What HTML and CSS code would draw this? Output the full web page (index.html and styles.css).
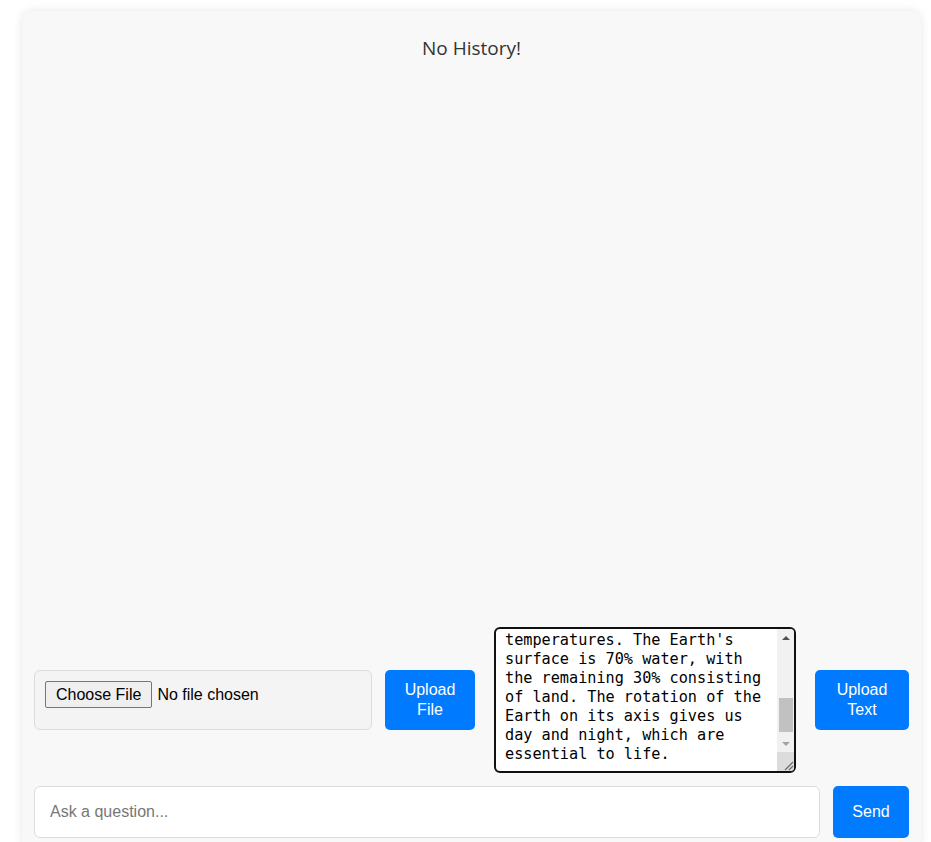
FILE: index.html
```html
<!DOCTYPE html>
<html lang="en">
<head>
<meta charset="utf-8">
<title>Chat</title>
<link rel="stylesheet" href="styles.css">
</head>
<body>
<div class="chat">
  <div class="history">
    <p class="empty">No History!</p>
  </div>
  <div class="upload-row">
    <div class="file-box">
      <input type="file" class="file-input">
    </div>
    <button class="btn btn-file">Upload File</button>
    <div class="text-wrap">
      <textarea class="text-input" id="txt">The Earth is the third planet from the Sun and the only astronomical object known to harbor life. It formed about 4.5 billion years ago. Its atmosphere is made mostly of nitrogen and oxygen, and it shields the surface from harmful solar radiation while keeping moderate
temperatures. The Earth's surface is 70% water, with the remaining 30% consisting of land. The rotation of the Earth on its axis gives us day and night, which are essential to life.</textarea>
      <div class="sb" aria-hidden="true">
        <div class="sb-btn"><span class="arrow-up"></span></div>
        <div class="sb-track"><div class="sb-thumb"></div></div>
        <div class="sb-btn"><span class="arrow-down"></span></div>
        <div class="sb-corner">
          <svg width="12" height="12" viewBox="0 0 12 12"><path d="M11 3 L3 11 M11 7 L7 11" stroke="#6b6b6b" stroke-width="1.2" fill="none"/></svg>
        </div>
      </div>
    </div>
    <button class="btn btn-text">Upload Text</button>
  </div>
  <div class="ask-row">
    <input type="text" class="ask-input" placeholder="Ask a question...">
    <button class="btn btn-send">Send</button>
  </div>
</div>
<script src="script.js"></script>
</body>
</html>
```
FILE: styles.css
```css
html, body {
  margin: 0;
  padding: 0;
  overflow: hidden;
  background: #ffffff;
}
body {
  font-family: "Liberation Sans", Arial, sans-serif;
}
.chat {
  box-sizing: border-box;
  width: 899px;
  height: 839px;
  margin: 11px 0 0 22px;
  padding: 12px;
  background: #f8f8f8;
  border-radius: 10px;
  box-shadow: 0 0 10px rgba(0, 0, 0, 0.1);
  display: flex;
  flex-direction: column;
}
.history {
  flex: 1;
  padding-top: 13px;
}
.empty {
  margin: 0;
  text-align: center;
  font-family: "Open Sans", "Noto Sans", sans-serif;
  font-size: 19px;
  line-height: 24px;
  color: #333;
}
.upload-row {
  display: flex;
  align-items: center;
}
.file-box {
  box-sizing: border-box;
  width: 338px;
  height: 60px;
  padding: 10px;
  background: #f4f4f4;
  border: 1px solid #dcdcdc;
  border-radius: 6px;
}
.file-input {
  font-family: "Liberation Sans", Arial, sans-serif;
  font-size: 16px;
  color: #000;
}
.file-input::file-selector-button {
  font-family: "Liberation Sans", Arial, sans-serif;
  font-size: 16px;
  height: 27px;
  padding: 0 10px;
  margin: 0 5px 0 0;
  background: #efefef;
  border: 1px solid #767676;
  border-radius: 2px;
  color: #000;
}
.btn {
  box-sizing: border-box;
  background: #007bff;
  color: #fff;
  border: none;
  border-radius: 5px;
  font-family: "Liberation Sans", Arial, sans-serif;
  font-size: 16px;
  line-height: 20px;
  padding: 10px 14px;
  height: 60px;
}
.btn-file {
  width: 90px;
  margin-left: 13px;
}
.text-wrap {
  position: relative;
  width: 302px;
  height: 146px;
  margin-left: 19px;
}
.text-input {
  display: block;
  box-sizing: border-box;
  width: 302px;
  height: 146px;
  margin: 0;
  padding: 10px 27px 7px 9px;
  border: 2px solid #111;
  border-radius: 6px;
  background: #fff;
  font-family: "DejaVu Sans Mono", "Liberation Mono", monospace;
  font-size: 15.2px;
  line-height: 19px;
  color: #000;
  caret-color: #000;
  outline: none;
  resize: none;
  overflow: hidden;
}
.sb {
  position: absolute;
  top: 2px;
  right: 2px;
  bottom: 2px;
  width: 17px;
  display: flex;
  flex-direction: column;
  background: #f1f1f1;
  border-radius: 0 4px 4px 0;
  overflow: hidden;
}
.sb-btn {
  height: 17px;
  display: flex;
  align-items: center;
  justify-content: center;
}
.arrow-up {
  width: 0;
  height: 0;
  border-left: 4px solid transparent;
  border-right: 4px solid transparent;
  border-bottom: 4px solid #505050;
}
.arrow-down {
  width: 0;
  height: 0;
  border-left: 4px solid transparent;
  border-right: 4px solid transparent;
  border-top: 4px solid #a3a3a3;
}
.sb-track {
  flex: 1;
  display: flex;
  flex-direction: column;
  justify-content: flex-end;
  padding: 0 1px 3px 2px;
}
.sb-thumb {
  height: 34px;
  background: #c1c1c1;
}
.sb-corner {
  height: 19px;
  background: #dcdcdc;
  display: flex;
  align-items: flex-end;
  justify-content: flex-end;
}
.btn-text {
  width: 94px;
  margin-left: 19px;
}
.ask-row {
  display: flex;
  margin-top: 13px;
}
.ask-input {
  flex: 1;
  box-sizing: border-box;
  height: 52px;
  padding: 0 15px;
  border: 1px solid #dcdcdc;
  border-radius: 6px;
  background: #fff;
  font-family: "Liberation Sans", Arial, sans-serif;
  font-size: 16px;
  color: #333;
  outline: none;
}
.ask-input::placeholder {
  color: #777;
}
.btn-send {
  width: 76px;
  height: 52px;
  margin-left: 13px;
  padding: 0;
}
```
FILE: script.js
```js
var t = document.getElementById('txt');
t.focus();
t.setSelectionRange(t.value.length, t.value.length);
t.scrollTop = t.scrollHeight;
```
